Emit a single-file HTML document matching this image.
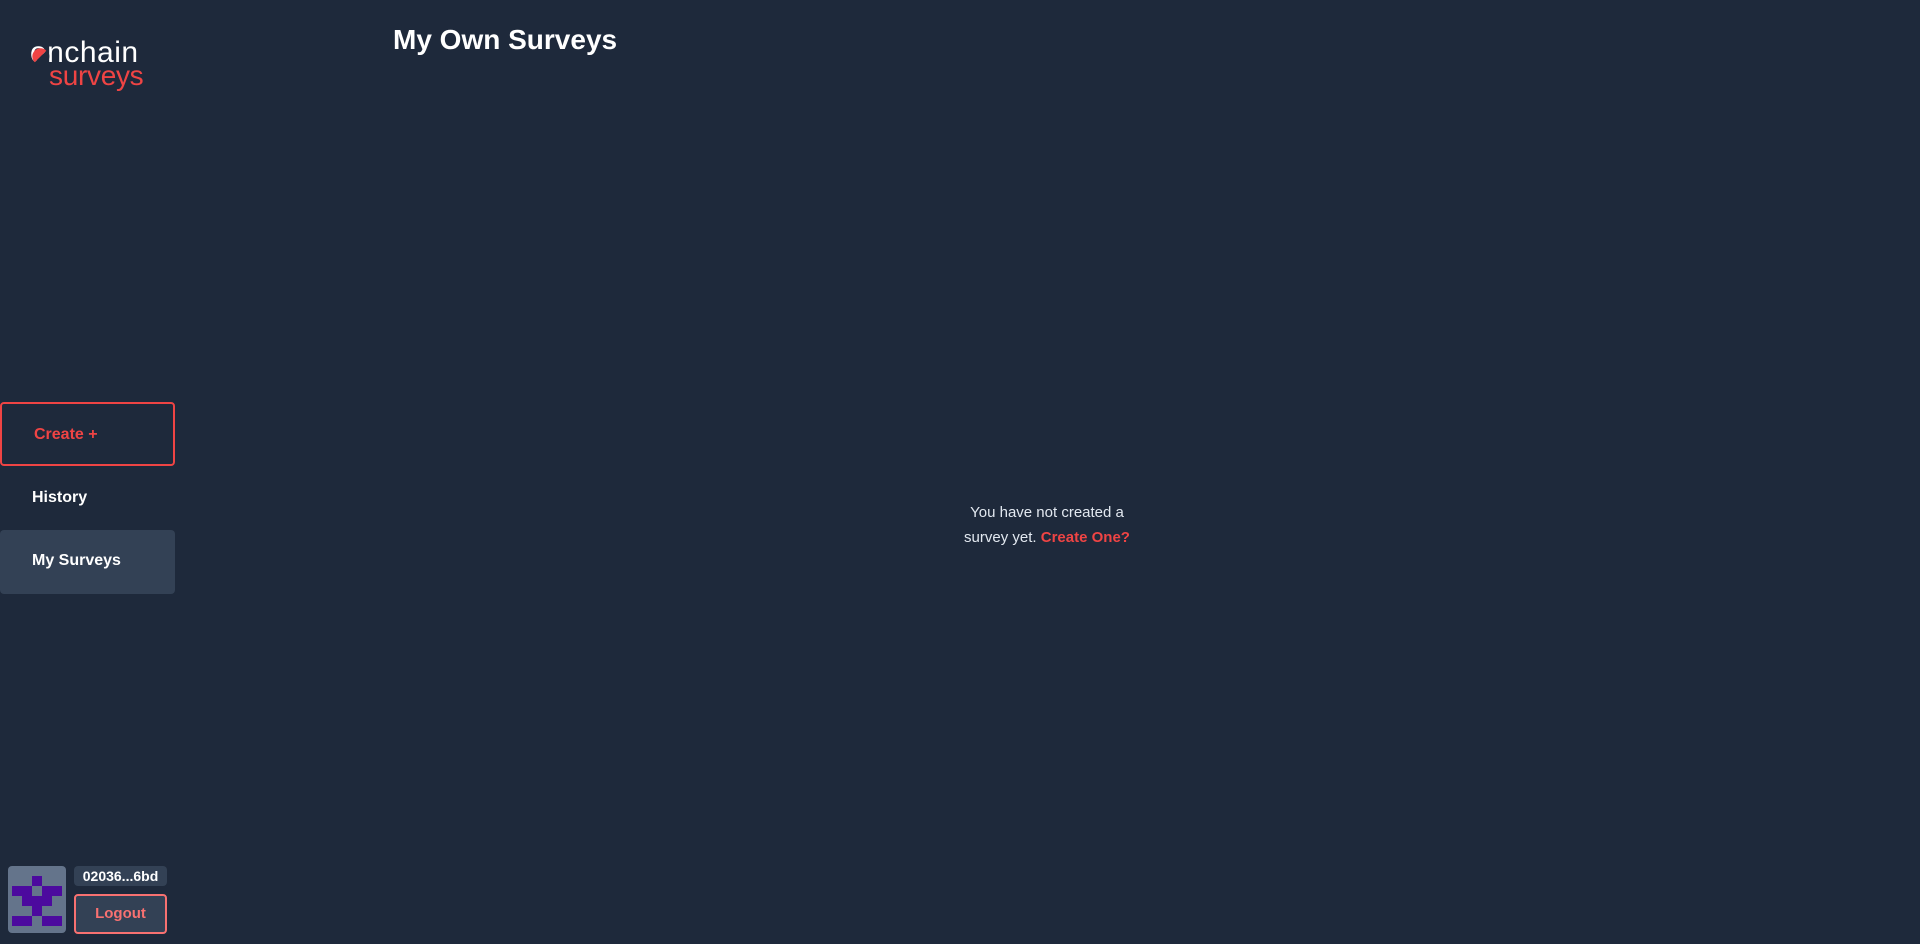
<!DOCTYPE html>
<html><head><meta charset="utf-8"><style>
*{margin:0;padding:0;box-sizing:border-box}
body{width:1920px;height:944px;background:#1e293b;font-family:"Liberation Sans",sans-serif;position:relative;overflow:hidden;color:#fff}
.abs{position:absolute}
.logo1{left:30px;top:37px;font-size:30px;color:#fff;letter-spacing:0.5px;line-height:32px}
.logo2{left:49px;top:61px;font-size:28px;color:#ef4444;letter-spacing:-0.3px;line-height:30px}
.create{left:0;top:402px;width:175px;height:64px;border:2px solid #ef4444;border-radius:4px;color:#ef4444;font-weight:bold;font-size:16px;padding:22px 0 0 32px}
.hist{left:32px;top:489px;font-weight:bold;font-size:16px}
.mys{left:0;top:530px;width:175px;height:64px;background:#334155;border-radius:4px;font-weight:bold;font-size:16px;padding:22px 0 0 32px}
.title{left:393px;top:24px;font-size:28px;font-weight:bold}
.center{left:947px;top:500px;width:200px;text-align:center;font-size:15px;line-height:25px;color:#e2e8f0}
.center b{color:#ef4444}
.av{left:8px;top:866px;width:58px;height:67px;background:#64748b;border-radius:4px}
.addr{left:74px;top:866px;width:93px;height:20px;background:#334155;border-radius:4px;font-size:14px;font-weight:bold;text-align:center;line-height:20px}
.lo{left:74px;top:894px;width:93px;height:40px;border:2px solid #f87171;border-radius:4px;background:#334155;color:#f87171;font-weight:bold;font-size:15px;text-align:center;line-height:36px}
</style></head><body>
<div class="abs logo1">onchain</div>
<svg class="abs" style="left:31px;top:47px" width="19" height="19" viewBox="0 0 19 19"><path d="M15.8 3.2 L3.2 15.8 A8.9 8.9 0 0 1 15.8 3.2 Z" fill="#1e293b" transform="rotate(180 9.5 9.5)"/><path d="M15.3 3.7 L3.7 15.3 A8.2 8.2 0 0 1 15.3 3.7 Z" fill="#ef4444" transform="rotate(180 9.5 9.5) rotate(180 9.5 9.5)"/></svg>
<div class="abs logo2">surveys</div>
<div class="abs create">Create +</div>
<div class="abs hist">History</div>
<div class="abs mys">My Surveys</div>
<div class="abs title">My Own Surveys</div>
<div class="abs center">You have not created a survey yet. <b>Create One?</b></div>
<div class="abs av"><svg width="58" height="67" viewBox="0 0 58 67">
<g fill="#4c0a9e"><rect x="24" y="10" width="10" height="10"/><rect x="4" y="20" width="20" height="10"/><rect x="34" y="20" width="20" height="10"/><rect x="14" y="30" width="30" height="10"/><rect x="24" y="40" width="10" height="10"/><rect x="4" y="50" width="20" height="10"/><rect x="34" y="50" width="20" height="10"/></g></svg></div>
<div class="abs addr">02036...6bd</div>
<div class="abs lo">Logout</div>
</body></html>
